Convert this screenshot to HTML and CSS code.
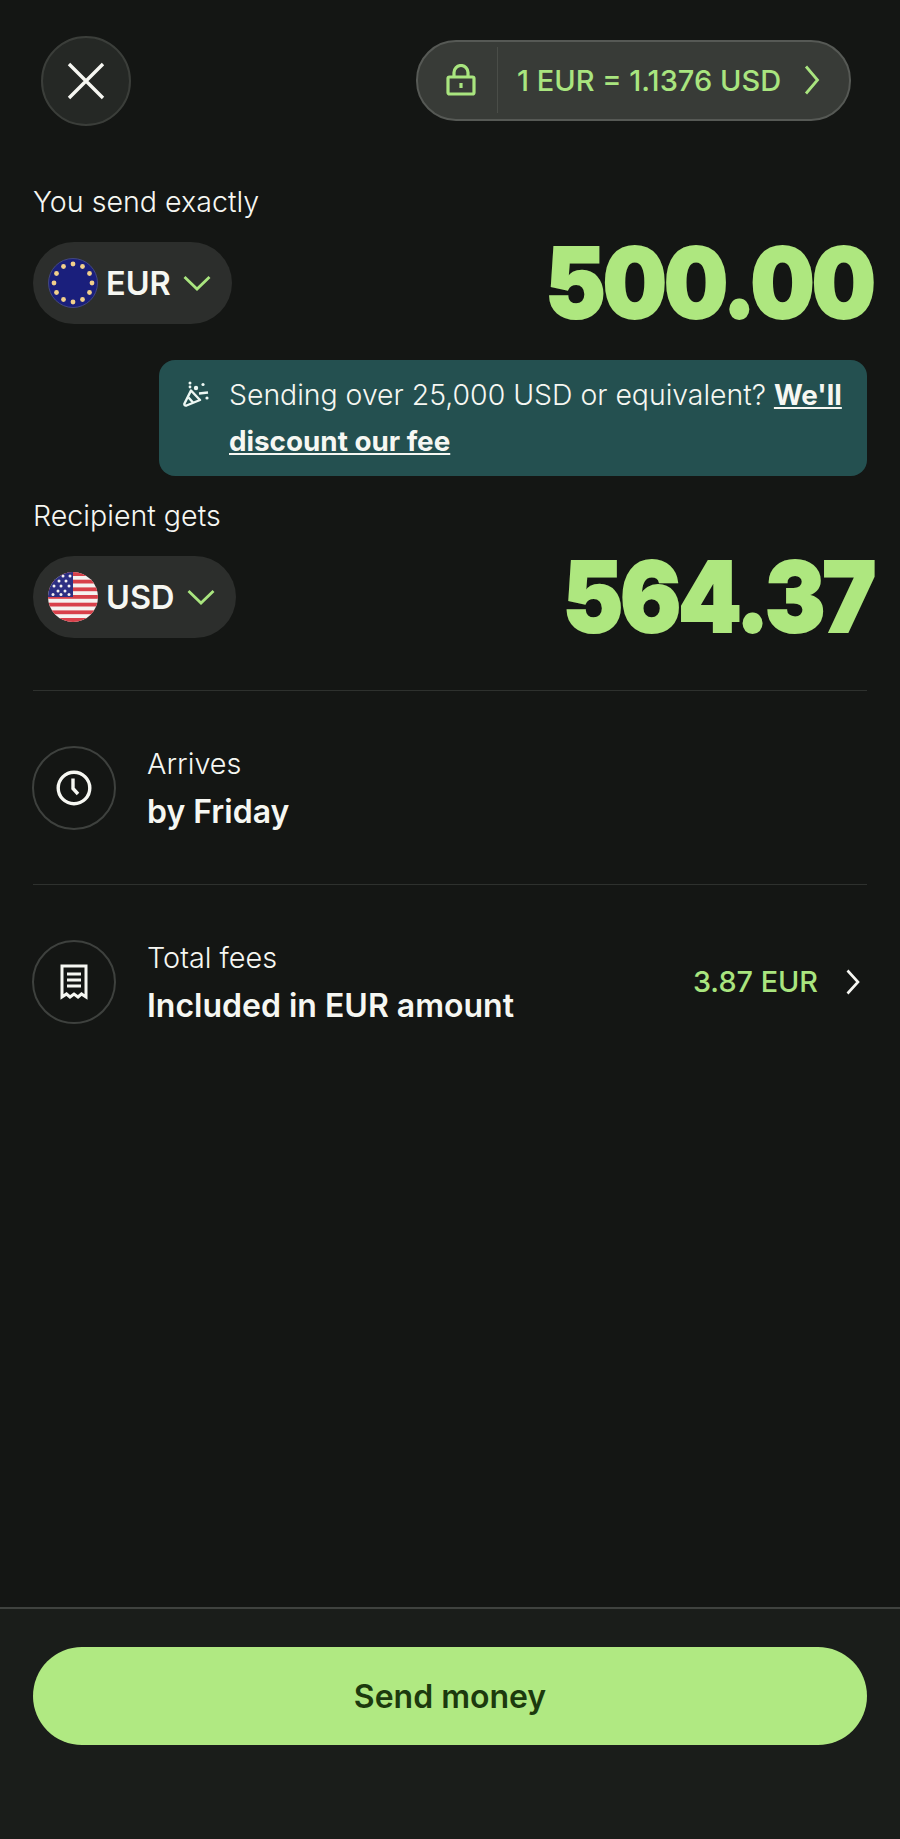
FILE: index.html
```html
<!DOCTYPE html>
<html lang="en">

<head>
  <meta charset="UTF-8">
  <meta name="viewport" content="width=device-width, initial-scale=1.0">
  <title>Send money</title>
  <link rel="stylesheet" href="styles.css">
</head>

<body>
  <main class="content">
    <!-- Close button and locked rate -->
    <header class="topBar">
      <button class="closeButton" aria-label="Close">
        <svg width="40" height="40" viewBox="0 0 40 40" fill="none" stroke="#f6f7f2" stroke-width="3.4">
          <path d="M3 3L37 37M37 3L3 37" />
        </svg>
      </button>
      <button class="ratePill">
        <span class="rateLock">
          <svg width="30" height="32" viewBox="0 0 30 32" fill="none" stroke="#a9e57f" stroke-width="3.2">
            <rect x="2" y="13" width="26" height="17" rx="1.5" />
            <path d="M8 13V8.5a7 7 0 0 1 14 0V13" />
            <path d="M15 19v5" />
          </svg>
        </span>
        <span class="rateText">1 EUR = 1.1376 USD</span>
        <svg class="rateArrow" width="16" height="30" viewBox="0 0 16 30" fill="none" stroke="#a9e57f" stroke-width="2.8">
          <path d="M2 1.500L13.500 15L2 28.500" />
        </svg>
      </button>
    </header>

    <!-- Amount you send -->
    <section class="amountBlock">
      <div class="amountLabel">You send exactly</div>
      <div class="amountRow">
        <button class="currencyPill">
          <svg class="flag" width="50" height="50" viewBox="0 0 50 50">
            <circle cx="25" cy="25" r="24.500" fill="#1a1f7c" stroke="#43487f" stroke-width="1" />
            <g fill="#f2d08c">
              <circle cx="25" cy="6" r="2.400" />
              <circle cx="34.500" cy="8.500" r="2.400" />
              <circle cx="41.500" cy="15.500" r="2.400" />
              <circle cx="44" cy="25" r="2.400" />
              <circle cx="41.500" cy="34.500" r="2.400" />
              <circle cx="34.500" cy="41.500" r="2.400" />
              <circle cx="25" cy="44" r="2.400" />
              <circle cx="15.500" cy="41.500" r="2.400" />
              <circle cx="8.500" cy="34.500" r="2.400" />
              <circle cx="6" cy="25" r="2.400" />
              <circle cx="8.500" cy="15.500" r="2.400" />
              <circle cx="15.500" cy="8.500" r="2.400" />
            </g>
          </svg>
          <span class="currencyCode">EUR</span>
          <svg class="chevron" width="28" height="16" viewBox="0 0 28 16" fill="none" stroke="#a9e57f" stroke-width="2.800">
            <path d="M1.500 2L14 14L26.500 2" />
          </svg>
        </button>
        <div class="amountValue">500.00</div>
      </div>
    </section>

    <!-- Large transfer notice -->
    <aside class="notice">
      <svg class="noticeIcon" width="26" height="26" viewBox="0 0 26 26" fill="none" stroke="#eef8f4" stroke-width="2.400" stroke-linejoin="round">
        <path d="M8 9.500L17 19L3.500 24.500C2 25 1 24 1.500 22.500Z" />
        <path d="M5.500 16.500L10 21.500" />
        <g fill="#eef8f4" stroke="none">
          <circle cx="7" cy="2" r="1.500" />
          <circle cx="7" cy="6" r="1.400" />
          <circle cx="13" cy="7" r="2.200" />
          <circle cx="20" cy="3.500" r="1.600" />
          <circle cx="24" cy="17" r="1.600" />
        </g>
        <path d="M16 12.500L25 11.500" />
      </svg>
      <p class="noticeText">Sending over 25,000 USD or equivalent? <a class="noticeLink" href="#">We'll</a> <a class="noticeLink" href="#">discount our fee</a></p>
    </aside>

    <!-- Amount the recipient gets -->
    <section class="amountBlock recipientBlock">
      <div class="amountLabel">Recipient gets</div>
      <div class="amountRow">
        <button class="currencyPill">
          <svg class="flag" width="50" height="50" viewBox="0 0 50 50">
            <defs>
              <clipPath id="flagCircle">
                <circle cx="25" cy="25" r="25" />
              </clipPath>
            </defs>
            <g clip-path="url(#flagCircle)">
              <rect width="50" height="50" fill="#f5f2f0" />
              <g fill="#d8404a">
                <rect y="0" width="50" height="4" />
                <rect y="7.700" width="50" height="3.800" />
                <rect y="15.400" width="50" height="3.800" />
                <rect y="23" width="50" height="3.800" />
                <rect y="30.700" width="50" height="3.800" />
                <rect y="38.400" width="50" height="3.800" />
                <rect y="46" width="50" height="4" />
              </g>
              <rect width="25" height="25" fill="#2d2f83" />
              <g fill="#f5f2f0">
                <circle cx="15" cy="4" r="1.500" />
                <circle cx="22" cy="4" r="1.500" />
                <circle cx="11" cy="9" r="1.500" />
                <circle cx="18" cy="9" r="1.500" />
                <circle cx="6" cy="14" r="1.500" />
                <circle cx="13" cy="14" r="1.500" />
                <circle cx="21" cy="14" r="1.500" />
                <circle cx="10" cy="19" r="1.500" />
                <circle cx="17" cy="19" r="1.500" />
                <circle cx="5" cy="22.500" r="1.500" />
                <circle cx="13" cy="22.500" r="1.500" />
                <circle cx="21" cy="22.500" r="1.500" />
              </g>
            </g>
          </svg>
          <span class="currencyCode">USD</span>
          <svg class="chevron" width="28" height="16" viewBox="0 0 28 16" fill="none" stroke="#a9e57f" stroke-width="2.800">
            <path d="M1.500 2L14 14L26.500 2" />
          </svg>
        </button>
        <div class="amountValue">564.37</div>
      </div>
    </section>

    <!-- Summary rows -->
    <section class="summaryRow firstRow">
      <div class="summaryIcon">
        <svg width="36" height="36" viewBox="0 0 36 36" fill="none" stroke="#f6f7f2" stroke-width="3.400">
          <circle cx="18" cy="18" r="15.800" />
          <path d="M17 8.500V18.500L22 24" />
        </svg>
      </div>
      <div class="summaryText">
        <div class="summaryLabel">Arrives</div>
        <div class="summaryValue">by Friday</div>
      </div>
    </section>

    <section class="summaryRow">
      <div class="summaryIcon">
        <svg width="28" height="36" viewBox="0 0 28 36" fill="none" stroke="#f6f7f2" stroke-width="3">
          <path d="M2 2H26V33L21.500 30L18 33L14 30L10 33L6.500 30L2 33Z" />
          <path d="M7 10H21M7 16H21M7 22H21" />
        </svg>
      </div>
      <div class="summaryText">
        <div class="summaryLabel">Total fees</div>
        <div class="summaryValue">Included in EUR amount</div>
      </div>
      <div class="feeAmount">3.87 EUR</div>
      <svg class="feeArrow" width="14" height="26" viewBox="0 0 14 26" fill="none" stroke="#f6f7f2" stroke-width="2.600">
        <path d="M1.500 1.500L12 13L1.500 24.500" />
      </svg>
    </section>
  </main>

  <footer class="footer">
    <button class="sendButton">Send money</button>
  </footer>
</body>

</html>
```

FILE: styles.css
```css
* {
  box-sizing: border-box;
}

body {
  margin: 0;
  height: 1839px;
  display: flex;
  flex-direction: column;
  background-color: #141614;
  color: #f6f7f2;
  font-family: Inter, 'Noto Sans', sans-serif;
}

button {
  font-family: inherit;
  border: none;
  cursor: pointer;
}

.content {
  flex: 1;
  padding: 36px 33px 0;
}

/* Top bar */
.topBar {
  display: flex;
  justify-content: space-between;
  align-items: center;
  padding: 0 16px 0 8px;
}

.closeButton {
  width: 90px;
  height: 90px;
  padding: 0;
  display: flex;
  align-items: center;
  justify-content: center;
  border-radius: 50%;
  background-color: #252825;
  border: 2px solid #3b3e3a;
}

.ratePill {
  width: 435px;
  height: 81px;
  margin-top: -2px;
  padding: 0 29px 0 0;
  display: flex;
  align-items: center;
  border-radius: 40px;
  background-color: #383b37;
  border: 2px solid #565955;
  color: #a9e57f;
}

.rateLock {
  width: 80px;
  height: 66px;
  padding-left: 6px;
  flex-shrink: 0;
  display: flex;
  align-items: center;
  justify-content: center;
  border-right: 1px solid #4a4d48;
}

.rateText {
  flex: 1;
  padding-left: 19px;
  font-size: 29px;
  font-weight: 500;
  text-align: left;
  white-space: nowrap;
}

/* Amount rows */
.amountBlock {
  margin-top: 56px;
}

.recipientBlock {
  margin-top: 20px;
}

.amountLabel {
  font-size: 28.6px;
  font-weight: 300;
  line-height: 40px;
}

.amountRow {
  margin-top: 20px;
  display: flex;
  justify-content: space-between;
  align-items: center;
}

.currencyPill {
  height: 82px;
  padding: 0 21px 0 15px;
  display: flex;
  align-items: center;
  border-radius: 41px;
  background-color: #2c2e2c;
  color: #f6f7f2;
}

.currencyCode {
  margin-left: 8px;
  font-size: 32.5px;
  font-weight: 600;
}

.chevron {
  margin-left: 12px;
}

/* Squeezed and thickened to get close to the heavy display face */
.amountValue {
  margin-right: -6px;
  color: #aee77f;
  font-size: 98px;
  font-weight: 900;
  line-height: 82px;
  letter-spacing: -3px;
  -webkit-text-stroke: 2px #aee77f;
  transform: scaleX(0.92);
  transform-origin: right center;
}

/* Notice */
.notice {
  margin: 36px 0 0 126px;
  padding: 12px 20px 12px 24px;
  display: flex;
  border-radius: 16px;
  background-color: #245050;
}

.noticeIcon {
  margin-top: 9px;
  flex-shrink: 0;
}

.noticeText {
  margin: 0 0 0 20px;
  font-size: 28.4px;
  font-weight: 300;
  line-height: 46px;
}

.noticeLink {
  color: #f6f7f2;
  font-size: 27.8px;
  font-weight: 700;
}

/* Summary rows */
.summaryRow {
  height: 194px;
  display: flex;
  align-items: center;
  border-top: 1px solid #2e312e;
}

.firstRow {
  margin-top: 52px;
}

.summaryIcon {
  width: 84px;
  height: 84px;
  margin-left: -1px;
  flex-shrink: 0;
  display: flex;
  align-items: center;
  justify-content: center;
  border-radius: 50%;
  border: 2px solid #3e413e;
}

.summaryText {
  flex: 1;
  margin-left: 31px;
}

.summaryLabel {
  font-size: 28.8px;
  font-weight: 300;
  line-height: 42px;
}

.summaryValue {
  margin-top: 6px;
  font-size: 32px;
  font-weight: 600;
  line-height: 42px;
}

.feeAmount {
  color: #a9e57f;
  font-size: 28.8px;
  font-weight: 500;
}

.feeArrow {
  margin: 0 7px 0 28px;
}

/* Footer */
.footer {
  height: 232px;
  padding: 38px 33px 0;
  background-color: #1a1d1a;
  border-top: 2px solid #3f423f;
}

.sendButton {
  width: 100%;
  height: 98px;
  border-radius: 49px;
  background-color: #b0e982;
  color: #1c3a0e;
  font-size: 32px;
  font-weight: 600;
}
```
